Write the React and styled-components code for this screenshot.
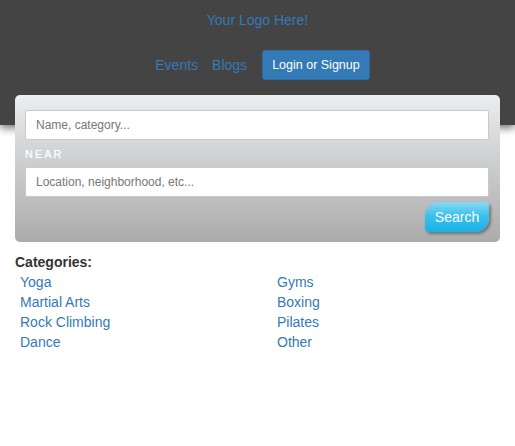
import React from 'react';
import styled, { createGlobalStyle } from 'styled-components';

const GlobalStyle = createGlobalStyle`
    body {
        margin: 0;
        background: #ffffff;
        font-family: "Liberation Sans", Arial, sans-serif;
    }
`;

const Header = styled.header`
    background: #444444;
    height: 125px;
    box-shadow: 0 3px 8px rgba(0, 0, 0, 0.55);
    display: flex;
    flex-direction: column;
    align-items: center;
    padding-top: 11px;
    box-sizing: border-box;
`;

const Logo = styled.a`
    color: #337ab7;
    font-size: 14px;
    line-height: 18px;
    text-decoration: none;
`;

const Nav = styled.nav`
    display: flex;
    align-items: center;
    margin-top: 21px;
    padding-left: 10px;
    gap: 14px;
`;

const NavLink = styled.a`
    color: #337ab7;
    font-size: 14px;
    text-decoration: none;
`;

const LoginButton = styled.button`
    background: #337ab7;
    color: #ffffff;
    border: 1px solid #2e6da4;
    border-radius: 3px;
    height: 30px;
    padding: 0 9px;
    font-family: inherit;
    font-size: 12.5px;
    margin-left: 1px;
`;

const SearchPanel = styled.form`
    margin: -30px 15px 0;
    position: relative;
    border-radius: 5px;
    background: linear-gradient(180deg, #eceeef 0%, #d4d5d6 35%, #ababab 100%);
    padding: 15px 11px 10px 10px;
    display: flex;
    flex-direction: column;
`;

const Input = styled.input`
    height: 30px;
    box-sizing: border-box;
    border: 1px solid #c9c9c9;
    border-radius: 2px;
    padding: 0 10px;
    font-family: inherit;
    font-size: 12px;
    color: #555;
    background: #fff;
    &::placeholder {
        color: #777;
    }
`;

const NearLabel = styled.label`
    color: #ffffff;
    font-size: 11px;
    letter-spacing: 2px;
    margin: 8px 0 7px;
    line-height: 12px;
    text-shadow: 0 0 1px rgba(255, 255, 255, 0.6);
`;

const Actions = styled.div`
    display: flex;
    justify-content: flex-end;
    margin-top: 5px;
`;

const SearchButton = styled.button`
    width: 64px;
    height: 30px;
    border: none;
    border-radius: 14px 4px 14px 4px;
    background: linear-gradient(180deg, #8bd8f4 0%, #3cc0ec 45%, #19b2e7 100%);
    color: #ffffff;
    font-family: inherit;
    font-size: 14px;
    box-shadow: 2px 2px 3px rgba(0, 0, 0, 0.35);
    padding: 0;
`;

const Categories = styled.section`
    padding: 12px 15px 0;
`;

const Heading = styled.h3`
    margin: 0 0 2px;
    font-size: 14px;
    font-weight: bold;
    color: #333;
    line-height: 16px;
`;

const CategoryGrid = styled.ul`
    list-style: none;
    margin: 0;
    padding: 0 0 0 5px;
    display: grid;
    grid-template-columns: 257px 1fr;
    grid-auto-flow: column;
    grid-template-rows: repeat(4, 20px);
`;

const Category = styled.li`
    font-size: 14px;
    line-height: 20px;
    a {
        color: #337ab7;
        text-decoration: none;
    }
`;

const categories = ['Yoga', 'Martial Arts', 'Rock Climbing', 'Dance', 'Gyms', 'Boxing', 'Pilates', 'Other'];

const App = () => (
    <>
        <GlobalStyle />
        <Header>
            <Logo href="#">Your Logo Here!</Logo>
            <Nav>
                <NavLink href="#">Events</NavLink>
                <NavLink href="#">Blogs</NavLink>
                <LoginButton type="button">Login or Signup</LoginButton>
            </Nav>
        </Header>
        <SearchPanel onSubmit={(e) => e.preventDefault()}>
            <Input placeholder="Name, category..." />
            <NearLabel>NEAR</NearLabel>
            <Input placeholder="Location, neighborhood, etc..." />
            <Actions>
                <SearchButton type="submit">Search</SearchButton>
            </Actions>
        </SearchPanel>
        <Categories>
            <Heading>Categories:</Heading>
            <CategoryGrid>
                {categories.map((c) => (
                    <Category key={c}>
                        <a href="#">{c}</a>
                    </Category>
                ))}
            </CategoryGrid>
        </Categories>
    </>
);

export default App;
